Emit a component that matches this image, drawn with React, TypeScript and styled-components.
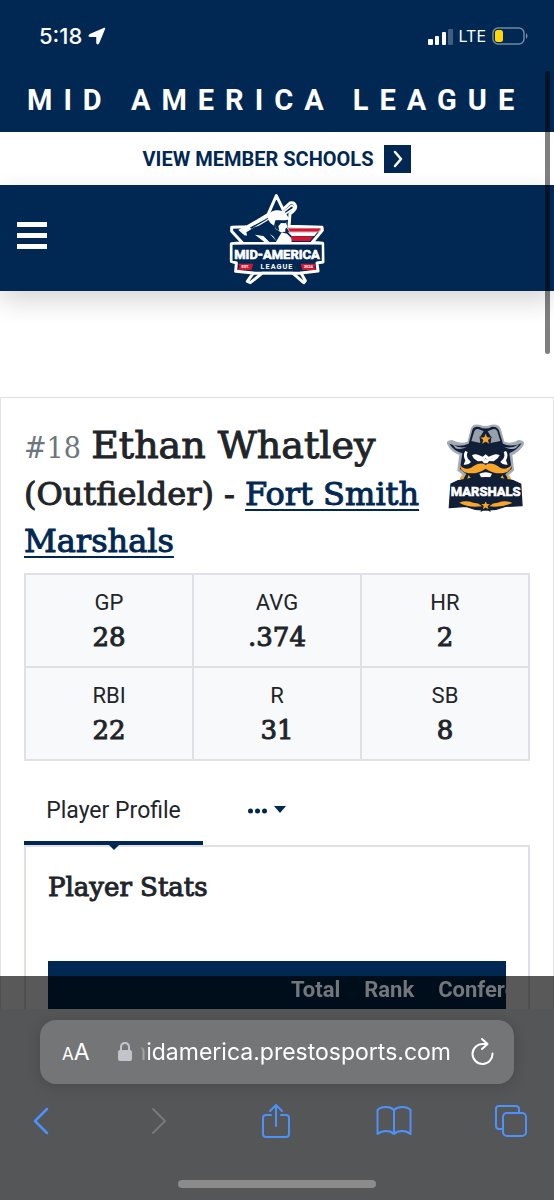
import React from "react";
import styled, { createGlobalStyle } from "styled-components";

const navy = "#002852";
const line = "#dfe1e7";
const ink = "#212529";
const sans = `Roboto, "Liberation Sans", sans-serif`;
const slab = `"Roboto Slab", "DejaVu Serif", serif`;
const slabCondensed = `"Roboto Slab", "DejaVu Serif Condensed", "DejaVu Serif", serif`;
const system = `Inter, "Liberation Sans", sans-serif`;

const GlobalStyle = createGlobalStyle`
  *, *::before, *::after { box-sizing: border-box; }
  body { margin: 0; background: #fff; color: ${ink}; font-family: ${sans}; }
  h1, h2, dl, dd, dt { margin: 0; }
  button { border: 0; padding: 0; background: none; color: inherit; font: inherit; cursor: pointer; }
  svg { display: block; }
`;

const Page = styled.div`
  height: 100vh;
  overflow: hidden;
`;

const StatusBar = styled.div`
  display: flex;
  align-items: center;
  justify-content: space-between;
  height: 72px;
  padding: 0 26px 0 39px;
  background: ${navy};
  color: #fff;
  font-family: ${system};
`;

const StatusGroup = styled.div`
  display: flex;
  align-items: center;
  gap: 6px;
`;

const Clock = styled.span`
  font-size: 22px;
  font-weight: 500;
`;

const Network = styled.span`
  font-size: 16px;
`;

const Banner = styled.div`
  height: 60px;
  padding-left: 27px;
  background: ${navy};
  color: #fff;
  font-size: 29px;
  font-weight: 700;
  line-height: 56px;
  letter-spacing: 11px;
  white-space: nowrap;
`;

const SchoolsLink = styled.a`
  display: flex;
  align-items: center;
  justify-content: center;
  gap: 11px;
  height: 53px;
  color: ${navy};
  font-size: 20px;
  font-weight: 700;
  text-decoration: none;
`;

const ArrowBox = styled.span`
  display: grid;
  place-items: center;
  width: 27px;
  height: 28px;
  background: ${navy};
`;

const Header = styled.header`
  display: grid;
  grid-template-columns: 1fr auto 1fr;
  align-items: center;
  height: 106px;
  padding: 0 17px;
  background: ${navy};
  box-shadow: 0 10px 24px rgba(0, 0, 0, 0.16);
`;

const MenuButton = styled.button`
  display: grid;
  gap: 6px;
  justify-self: start;
  width: 30px;
  margin-bottom: 6px;
`;

const MenuLine = styled.span`
  height: 5px;
  background: #fff;
`;

const Card = styled.main`
  height: 900px;
  margin-top: 106px;
  padding: 24px 23px;
  border: 1px solid ${line};
`;

const PlayerHead = styled.div`
  display: flex;
  justify-content: space-between;
  align-items: flex-start;
  padding-right: 4px;
`;

const PlayerTitle = styled.h1`
  max-width: 410px;
  font-family: ${slab};
  font-size: 32px;
  font-weight: 500;
  line-height: 47px;
  -webkit-text-stroke: 1px currentColor;
`;

const Jersey = styled.span`
  color: #6c757d;
  font-family: ${slabCondensed};
  font-size: 30px;
  -webkit-text-stroke: 0;
`;

const PlayerName = styled.span`
  font-size: 38px;
`;

const TeamLink = styled.a`
  color: ${navy};
  text-decoration-thickness: 2px;
  text-underline-offset: 4px;
`;

const StatGrid = styled.dl`
  display: grid;
  grid-template-columns: repeat(3, 1fr);
  margin-top: 8px;
  border: 1px solid ${line};
`;

const StatCell = styled.div`
  height: 93px;
  padding-top: 12px;
  border: 1px solid ${line};
  background: #f8f9fb;
  text-align: center;
`;

const StatLabel = styled.dt`
  font-size: 22px;
  line-height: 32px;
`;

const StatValue = styled.dd`
  font-family: ${slab};
  font-size: 26px;
  font-weight: 500;
  line-height: 36px;
  -webkit-text-stroke: 1px currentColor;
`;

const TabBar = styled.div`
  display: flex;
  height: 86px;
  padding-top: 19px;
  border-bottom: 2px solid ${line};
`;

const Tab = styled.button`
  position: relative;
  width: 179px;
  height: 65px;
  border-bottom: 4px solid ${navy};
  font-size: 23px;
  &::after {
    content: "";
    position: absolute;
    top: 100%;
    left: 50%;
    margin: 4px 0 0 -5px;
    border: 5px solid transparent;
    border-top-color: ${navy};
    border-bottom: 0;
  }
`;

const MoreTabs = styled.button`
  display: flex;
  align-items: center;
  height: 60px;
  margin-left: 44px;
`;

const Panel = styled.section`
  height: 400px;
  padding: 20px 22px;
  border: solid ${line};
  border-width: 0 2px;
`;

const PanelTitle = styled.h2`
  font-family: ${slab};
  font-size: 26px;
  font-weight: 500;
  line-height: 40px;
  -webkit-text-stroke: 1px currentColor;
`;

const TableScroller = styled.div`
  margin-top: 54px;
  overflow: hidden;
  background: ${navy};
`;

const StatsTable = styled.table`
  height: 56px;
  border-collapse: collapse;
`;

const HeadCell = styled.th`
  position: relative;
  z-index: 3;
  padding: 0 12px;
  color: #73777b;
  font-size: 22px;
  text-align: left;
  white-space: nowrap;
  &:first-child { min-width: 231px; }
`;

const ScrollThumb = styled.div`
  position: fixed;
  z-index: 1;
  top: 71px;
  right: 4px;
  width: 5px;
  height: 283px;
  border-radius: 3px;
  background: rgba(0, 0, 0, 0.5);
`;

const BrowserChrome = styled.footer`
  position: fixed;
  z-index: 2;
  right: 0;
  bottom: 0;
  left: 0;
  padding-top: 33px;
  background: rgba(0, 0, 0, 0.65);
  font-family: ${system};
`;

const ChromeBody = styled.div`
  padding: 11px 0 12px;
  background: #555657;
`;

const AddressBar = styled.div`
  display: flex;
  align-items: center;
  height: 64px;
  margin: 0 40px;
  padding: 0 19px 0 22px;
  border-radius: 16px;
  background: #747577;
  box-shadow: 0 2px 14px rgba(0, 0, 0, 0.16);
  color: #fff;
`;

const TextSize = styled.button`
  margin-right: 28px;
  font-size: 23px;
`;

const SmallA = styled.span`
  font-size: 17px;
`;

const Address = styled.button`
  display: flex;
  flex: 1;
  justify-content: flex-end;
  min-width: 0;
  margin: 0 20px 0 8px;
  overflow: hidden;
  font-size: 23px;
  line-height: 36px;
  white-space: nowrap;
  mask-image: linear-gradient(to right, transparent, #000 10px);
`;

const Toolbar = styled.nav`
  display: flex;
  align-items: center;
  justify-content: space-between;
  height: 74px;
  padding: 0 25px 0 23px;
  color: #4c92fb;
`;

const ToolButton = styled.button`
  display: grid;
  place-items: center;
  min-width: ${(p: { $wide?: boolean }) => (p.$wide ? "36px" : "0")};
  &:disabled { color: #77787a; }
`;

const HomeIndicator = styled.div`
  width: 198px;
  height: 8px;
  margin: 22px auto 0;
  border-radius: 4px;
  background: #8c8c8c;
`;

const stroke = { fill: "none", stroke: "currentColor", strokeLinecap: "round", strokeLinejoin: "round" } as const;

const LeagueLogo = () => (
  <svg width="125" height="105" viewBox="0 0 375 315" role="img" aria-label="Mid-America League">
    <path d="M184 29 L204 70 L225 51 Q239 48 242 61 Q243 71 225 83 L222 121 L321 124 L322 133 L292 169 L323 172 L324 228 L306 231 L309 255 L258 261 L271 284 L266 290 L234 262 L141 262 L106 290 L97 286 L115 261 L62 256 L64 231 L49 226 L49 173 L82 170 L50 136 L50 124 L98 122 L159 86 Z" fill={navy} stroke="#fff" strokeWidth="9" strokeLinejoin="round" />
    <path d="M177 78 L184 42 L196 76 Z" fill={navy} />
    <path d="M102 124 L161 92 L162 99 L107 132 Z" fill={navy} stroke="#fff" strokeWidth="4" />
    <path d="M204 79 L229 59 Q238 59 235 68 L211 84 Z" fill={navy} stroke="#fff" strokeWidth="5" />
    <path d="M160 101 Q158 76 182 73 Q211 70 218 91 L223 99 L216 102 L181 103 L177 119 L166 111 Z" fill="#fff" />
    <path d="M184 106 L213 103 L214 114 L218 124 L211 128 L211 137 L197 139 L181 128 Z" fill="#fff" />
    <path d="M183 105 L218 103 L211 112 L198 111 L190 121 L193 135 L181 127 Z" fill={navy} />
    <path d="M70 132 L92 118 L111 130 L111 151 L88 148 Z" fill="#fff" />
    <path d="M94 139 L118 124 L139 118 L165 119 L187 137 L165 147 L154 166 L100 168 Z" fill={navy} />
    <path d="M120 146 L145 150 L164 169 L149 169 Z" fill="#fff" />
    <path d="M165 145 L185 166 L174 150 Z" fill="#fff" />
    <path d="M184 166 L200 139 L216 143 L231 158 L229 170 L184 170 Z" fill="#fff" />
    <path d="M217 126 H319 L311 138 H224 Z" fill="#d31532" stroke="#fff" strokeWidth="2" />
    <path d="M219 139 H307 L298 150 H230 Z" fill="#fff" />
    <path d="M227 151 H295 L285 165 H231 Z" fill="#d31532" />
    <path d="M54 172 H319" stroke="#fff" strokeWidth="8" />
    <path d="M53 176 H320 V225 H53 Z" fill={navy} />
    <path d="M70 233 H115 L109 252 H68 L74 243 Z M257 233 H303 L298 243 L304 252 H262 Z" fill="#d31532" />
    <path d="M116 262 H258" stroke="#fff" strokeWidth="9" />
    <path d="M143 266 H232 L224 280 L187 275 L150 280 Z" fill={navy} />
    <text x="186" y="218" textAnchor="middle" fill="#fff" stroke="#fff" strokeWidth="2" fontFamily="Roboto, sans-serif" fontWeight="700" fontSize="39">MID-AMERICA</text>
    <text x="186" y="248" textAnchor="middle" fill="#fff" fontFamily="Roboto, sans-serif" fontWeight="700" fontSize="22" letterSpacing="3">LEAGUE</text>
    <text x="91" y="247" textAnchor="middle" fill="#fff" fontFamily="Roboto, sans-serif" fontWeight="700" fontSize="12">EST.</text>
    <text x="280" y="247" textAnchor="middle" fill="#fff" fontFamily="Roboto, sans-serif" fontWeight="700" fontSize="12">2024</text>
  </svg>
);

const starPath = "M0 -18 L5 -6 L18 -5 L8 3 L12 16 L0 9 L-12 16 L-8 3 L-18 -5 L-5 -6 Z";

const MarshalsLogo = () => (
  <svg width="80" height="90" viewBox="33 36 240 270" role="img" aria-label="Fort Smith Marshals">
    <path d="M39 103 Q34 93 50 92 Q76 105 99 97 L109 58 Q113 42 132 46 Q152 54 170 46 Q190 42 196 59 L206 96 Q229 106 251 92 Q270 93 263 106 Q250 125 230 134 L235 181 L217 196 L225 210 L80 210 L86 194 L69 181 L75 134 Q47 123 39 103 Z" fill="#a4abb6" stroke="#a4abb6" strokeWidth="4" />
    <path d="M43 101 Q73 113 101 101 L112 60 Q117 47 133 51 Q152 61 171 50 Q189 49 193 65 L204 101 Q231 113 260 100 Q247 120 223 130 L230 176 L211 193 L220 207 L85 207 L94 192 L75 177 L82 130 Q55 121 43 101 Z" fill="#101f35" />
    <path d="M109 93 L118 64 Q122 54 136 59 L146 64 L134 83 L136 99 Z M196 93 L187 64 Q182 54 169 59 L158 64 L169 82 L167 99 Z" fill="#969faa" />
    <path d="M52 103 Q71 116 95 111 Q75 121 62 115 Z M253 103 Q233 116 208 111 Q231 122 243 114 Z" fill="#a4abb6" />
    <path transform="translate(152 87)" d={starPath} fill="#f8a529" stroke="#101f35" strokeWidth="2" />
    <path d="M91 123 Q82 135 91 151 L86 164 Q101 166 108 156 L99 146 Q93 137 98 126 Z M213 123 Q222 135 213 151 L218 164 Q203 166 196 156 L205 146 Q211 137 206 126 Z" fill="#fff" />
    <path d="M111 136 Q121 130 133 136 L143 140 L152 133 L161 140 L172 136 Q184 130 194 136 L188 145 L176 154 L160 153 L152 145 L144 153 L128 154 L116 145 Z" fill="#fff" />
    <path d="M141 152 Q152 142 163 152 L157 160 H147 Z" fill="#fff" />
    <path d="M75 164 Q86 181 107 174 Q136 153 152 165 Q168 153 197 174 Q218 181 229 164 Q228 185 207 189 Q178 194 152 176 Q126 194 97 189 Q76 185 75 164 Z" fill="#f8a529" />
    <path d="M133 191 Q152 182 171 191 L165 203 Q152 208 139 203 Z" fill="#fff" />
    <path d="M82 192 L74 207 L87 211 Z M220 192 L229 207 L216 211 Z M101 195 L109 207 H96 Z M202 195 L195 207 H208 Z" fill="#f8a529" />
    <path d="M48 222 L67 213 Q152 193 237 213 L257 222 L261 287 L211 289 L183 298 L152 300 L121 298 L93 289 L43 293 Z" fill="#101f35" stroke="#101f35" strokeWidth="4" strokeLinejoin="round" />
    <path d="M73 278 Q91 270 115 278 L144 283 L160 283 L188 278 Q213 269 232 279 Q205 290 180 290 L152 288 L120 290 Q94 290 73 278 Z" fill="#f8a529" />
    <path transform="translate(152 286)" d={starPath} fill="#f8a529" stroke="#101f35" strokeWidth="4" />
    <text x="152" y="257" textAnchor="middle" fill="#fff" stroke="#fff" strokeWidth="2" fontFamily="Roboto, sans-serif" fontWeight="700" fontSize="39">MARSHALS</text>
  </svg>
);

const stats = [
  ["GP", "28"],
  ["AVG", ".374"],
  ["HR", "2"],
  ["RBI", "22"],
  ["R", "31"],
  ["SB", "8"],
];

export default function App() {
  return (
    <Page>
      <GlobalStyle />
      <StatusBar>
        <StatusGroup>
          <Clock>5:18</Clock>
          <svg width="18" height="18" viewBox="0 0 18 18" aria-hidden="true">
            <path d="M16.500 1.500 L10.500 16 Q9.700 17.500 9 16 V9.300 H2 Q0.500 8.800 2 7.800 Z" fill="#fff" stroke="#fff" strokeWidth="1.500" strokeLinejoin="round" />
          </svg>
        </StatusGroup>
        <StatusGroup>
          <svg width="25" height="17" viewBox="0 0 25 17" aria-hidden="true">
            <rect x="0" y="11" width="5" height="6" rx="1" fill="#fff" />
            <rect x="7" y="8" width="4" height="9" rx="1" fill="#fff" />
            <rect x="14" y="4" width="4" height="13" rx="1" fill="#fff" />
            <rect x="20" y="1" width="5" height="16" rx="1" fill="#fff" opacity=".25" />
          </svg>
          <Network>LTE</Network>
          <svg width="36" height="18" viewBox="0 0 36 18" aria-hidden="true">
            <rect x="1" y="1" width="31" height="16" rx="5" fill="none" stroke="#fff" strokeOpacity=".45" strokeWidth="1.500" />
            <rect x="3" y="3" width="8" height="12" rx="2.500" fill="#ffd60a" />
            <path d="M34 6 Q37 9 34 12 Z" fill="#fff" opacity=".5" />
          </svg>
        </StatusGroup>
      </StatusBar>
      <Banner>MID AMERICA LEAGUE</Banner>
      <SchoolsLink href="#schools">
        VIEW MEMBER SCHOOLS
        <ArrowBox>
          <svg width="12" height="18" viewBox="0 0 12 18" {...stroke} stroke="#fff" strokeWidth="2.500" aria-hidden="true">
            <path d="M3 2 L9 9 L3 16" />
          </svg>
        </ArrowBox>
      </SchoolsLink>
      <Header>
        <MenuButton aria-label="Open menu">
          <MenuLine />
          <MenuLine />
          <MenuLine />
        </MenuButton>
        <LeagueLogo />
      </Header>
      <Card>
        <PlayerHead>
          <PlayerTitle>
            <Jersey>#18</Jersey> <PlayerName>Ethan Whatley</PlayerName> (Outfielder) -{" "}
            <TeamLink href="#team">Fort Smith Marshals</TeamLink>
          </PlayerTitle>
          <MarshalsLogo />
        </PlayerHead>
        <StatGrid>
          {stats.map(([label, value]) => (
            <StatCell key={label}>
              <StatLabel>{label}</StatLabel>
              <StatValue>{value}</StatValue>
            </StatCell>
          ))}
        </StatGrid>
        <TabBar role="tablist">
          <Tab role="tab" aria-selected="true">Player Profile</Tab>
          <MoreTabs aria-label="More tabs">
            <svg width="40" height="12" viewBox="0 0 40 12" fill={navy} aria-hidden="true">
              <circle cx="3.500" cy="7" r="2.500" />
              <circle cx="10.500" cy="7" r="2.500" />
              <circle cx="17.500" cy="7" r="2.500" />
              <path d="M27 2 H39 L33 9 Z" />
            </svg>
          </MoreTabs>
        </TabBar>
        <Panel>
          <PanelTitle>Player Stats</PanelTitle>
          <TableScroller>
            <StatsTable>
              <thead>
                <tr>
                  <HeadCell aria-label="Statistic" />
                  <HeadCell>Total</HeadCell>
                  <HeadCell>Rank</HeadCell>
                  <HeadCell>Conference</HeadCell>
                </tr>
              </thead>
            </StatsTable>
          </TableScroller>
        </Panel>
      </Card>
      <ScrollThumb />
      <BrowserChrome>
        <ChromeBody>
          <AddressBar>
            <TextSize aria-label="Page settings">
              <SmallA>A</SmallA>A
            </TextSize>
            <svg width="14" height="20" viewBox="0 0 14 20" aria-hidden="true">
              <rect x="0" y="8" width="14" height="11" rx="2" fill="#c3c3cb" />
              <path d="M3 9 V5.500 Q3 1 7 1 Q11 1 11 5.500 V9" fill="none" stroke="#c3c3cb" strokeWidth="2" />
            </svg>
            <Address>midamerica.prestosports.com</Address>
            <ToolButton aria-label="Reload">
              <svg width="24" height="28" viewBox="0 0 24 28" {...stroke} strokeWidth="2" aria-hidden="true">
                <path d="M21.500 15.500 A10 10 0 1 1 12 6 H16 M11 1 L16.500 6 L11 11" />
              </svg>
            </ToolButton>
          </AddressBar>
          <Toolbar>
            <ToolButton $wide aria-label="Back">
              <svg width="18" height="28" viewBox="0 0 18 28" {...stroke} strokeWidth="2.500" aria-hidden="true">
                <path d="M15 2 L3 14 L15 26" />
              </svg>
            </ToolButton>
            <ToolButton $wide aria-label="Forward" disabled>
              <svg width="18" height="28" viewBox="0 0 18 28" {...stroke} strokeWidth="2" aria-hidden="true">
                <path d="M3 2 L15 14 L3 26" />
              </svg>
            </ToolButton>
            <ToolButton $wide aria-label="Share">
              <svg width="30" height="36" viewBox="0 0 30 36" {...stroke} strokeWidth="2" aria-hidden="true">
                <path d="M10 12 H5 Q2 12 2 15 V31 Q2 34 5 34 H25 Q28 34 28 31 V15 Q28 12 25 12 H20 M15 23 V2 M9 8 L15 2 L21 8" />
              </svg>
            </ToolButton>
            <ToolButton $wide aria-label="Bookmarks">
              <svg width="36" height="32" viewBox="0 0 36 32" {...stroke} strokeWidth="2" aria-hidden="true">
                <path d="M18 29 V5 Q15 2 10 2 Q4 2 1.500 5 V29 Q5 26 10 26 Q15 26 18 29 Q21 26 26 26 Q31 26 34.500 29 V5 Q32 2 26 2 Q21 2 18 5" />
              </svg>
            </ToolButton>
            <ToolButton $wide aria-label="Tabs">
              <svg width="34" height="34" viewBox="0 0 34 34" {...stroke} strokeWidth="2" aria-hidden="true">
                <rect x="9" y="9" width="23" height="23" rx="4" />
                <path d="M9 25 H5 Q2 25 2 22 V5 Q2 2 5 2 H21 Q25 2 25 5 V9" />
              </svg>
            </ToolButton>
          </Toolbar>
          <HomeIndicator />
        </ChromeBody>
      </BrowserChrome>
    </Page>
  );
}
